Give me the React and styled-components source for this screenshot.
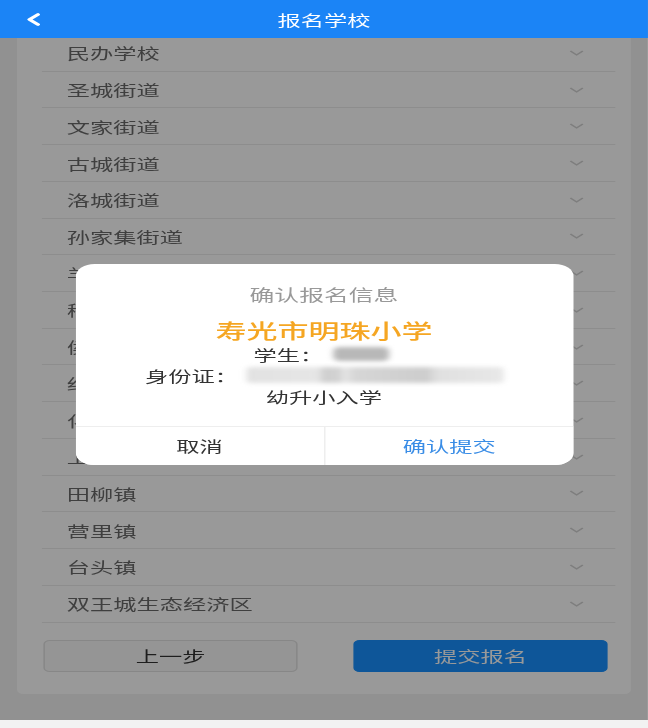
import React from 'react';
import styled, { createGlobalStyle } from 'styled-components';

// the reference capture is stretched sideways, so the page is laid out narrow and widened
const STRETCH = 1.55;

const districts = [
  '民办学校',
  '圣城街道',
  '文家街道',
  '古城街道',
  '洛城街道',
  '孙家集街道',
  '羊口镇',
  '稻田镇',
  '侯镇',
  '纪台镇',
  '化龙镇',
  '上口镇',
  '田柳镇',
  '营里镇',
  '台头镇',
  '双王城生态经济区',
];

const GlobalStyle = createGlobalStyle`
  html, body {
    margin: 0;
    padding: 0;
    background: #f2f2f2;
    overflow: hidden;
  }
`;

const Chevron = () => (
  <svg width="10" height="6" viewBox="0 0 10 6" fill="none">
    <polyline points="1,1 5,5 9,1" stroke="#d2d2d2" strokeWidth="1.2" />
  </svg>
);

const BackArrow = () => (
  <svg width="9" height="13" viewBox="0 0 9 13" fill="none">
    <polyline
      points="7.5,1.5 2,6.5 7.5,11.5"
      stroke="#fff"
      strokeWidth="2.6"
      strokeLinecap="round"
      strokeLinejoin="round"
    />
  </svg>
);

const App = () => (
  <>
    <GlobalStyle />
    <Stage>
      <Header>
        <BackButton>
          <BackArrow />
        </BackButton>
        <HeaderTitle>报名学校</HeaderTitle>
      </Header>

      <Body>
        <Card>
          <DistrictList>
            {districts.map(name => (
              <DistrictRow key={name}>
                <span>{name}</span>
                <Chevron />
              </DistrictRow>
            ))}
          </DistrictList>

          <ActionRow>
            <ActionButton>上一步</ActionButton>
            <ActionButton primary>提交报名</ActionButton>
          </ActionRow>
        </Card>
      </Body>

      <Mask />

      <DialogLayer>
        <Dialog>
          <DialogBody>
            <DialogTitle>确认报名信息</DialogTitle>
            <SchoolName>寿光市明珠小学</SchoolName>
            <InfoLine>
              学生：<RedactedName />
            </InfoLine>
            <InfoLine>
              身份证：<RedactedId />
            </InfoLine>
            <InfoLine>幼升小入学</InfoLine>
          </DialogBody>
          <DialogFooter>
            <DialogButton>取消</DialogButton>
            <DialogButton confirm>确认提交</DialogButton>
          </DialogFooter>
        </Dialog>
      </DialogLayer>
    </Stage>
  </>
);

const Stage = styled.div`
  position: relative;
  width: ${648 / STRETCH}px;
  height: 100vh;
  overflow: hidden;
  transform: scaleX(${STRETCH});
  transform-origin: 0 0;
  background: #f2f2f2;
  font-family: 'Noto Sans CJK SC', 'Noto Sans', sans-serif;
`;

const Header = styled.header`
  position: relative;
  z-index: 3;
  height: 38px;
  background: #1b84f6;
  display: flex;
  align-items: center;
  justify-content: center;
`;

const BackButton = styled.div`
  position: absolute;
  left: 17px;
  top: 13px;
  display: flex;
`;

const HeaderTitle = styled.h1`
  margin: 0;
  font-size: 15px;
  font-weight: 400;
  color: #fff;
`;

const Body = styled.main`
  padding: 0 11px;
`;

const Card = styled.section`
  margin-top: -3px;
  background: #fff;
  border-radius: 0 0 4px 4px;
  padding: 0 10px 22px 16px;
`;

const DistrictList = styled.ul`
  list-style: none;
  margin: 0;
  padding: 0;
`;

const DistrictRow = styled.li`
  box-sizing: border-box;
  height: 36.73px;
  display: flex;
  align-items: center;
  justify-content: space-between;
  padding: 0 20px 0 16px;
  border-bottom: 1px solid #ececec;
  font-size: 15px;
  color: #6a6a6a;
`;

const ActionRow = styled.div`
  display: grid;
  grid-template-columns: 1fr 1fr;
  gap: 36px;
  margin-top: 17px;
  padding: 0 5px 0 1px;
`;

const ActionButton = styled.button`
  height: 32px;
  border-radius: 4px;
  font-family: inherit;
  font-size: 15px;
  border: 1px solid ${props => (props.primary ? '#1890ff' : '#e2e2e2')};
  background: ${props => (props.primary ? '#1890ff' : '#f9f9f9')};
  color: ${props => (props.primary ? '#fff' : '#333')};
`;

const Mask = styled.div`
  position: absolute;
  top: 0;
  left: 0;
  right: 0;
  bottom: 8px;
  z-index: 2;
  background: rgba(0, 0, 0, 0.4);
`;

const DialogLayer = styled.div`
  position: absolute;
  inset: 0;
  z-index: 4;
  display: flex;
  align-items: center;
  justify-content: center;
`;

const Dialog = styled.div`
  width: 321px;
  background: #fff;
  border-radius: 12px;
  overflow: hidden;
  text-align: center;
`;

const DialogBody = styled.div`
  padding: 18px 0 19px;
`;

const DialogTitle = styled.div`
  font-size: 16px;
  line-height: 24px;
  color: #999;
  margin-bottom: 12px;
`;

const SchoolName = styled.div`
  font-size: 20px;
  line-height: 26px;
  font-weight: 500;
  color: #f5a623;
`;

const InfoLine = styled.div`
  font-size: 15px;
  line-height: 21px;
  color: #333;
  display: flex;
  align-items: center;
  justify-content: center;
`;

const RedactedName = styled.span`
  display: inline-block;
  width: 36px;
  height: 14px;
  margin-left: 6px;
  margin-right: 4px;
  border-radius: 4px;
  background: #b8b8b8;
  filter: blur(2px);
`;

const RedactedId = styled.span`
  display: inline-block;
  width: 166px;
  height: 16px;
  margin-left: 5px;
  border-radius: 3px;
  background: linear-gradient(
    90deg,
    #e2e2e2 0%,
    #e6e6e6 28%,
    #cfcfcf 30%,
    #d2d2d2 36%,
    #e6e6e6 38%,
    #d6d6d6 42%,
    #cdcdcd 70%,
    #e0e0e0 74%,
    #e8e8e8 100%
  );
  filter: blur(2px);
`;

const DialogFooter = styled.div`
  display: grid;
  grid-template-columns: 1fr 1fr;
  border-top: 1px solid #eee;
`;

const DialogButton = styled.button`
  height: 38px;
  border: none;
  background: #fff;
  font-family: inherit;
  font-size: 15px;
  color: ${props => (props.confirm ? '#3a8de6' : '#333')};
  border-left: ${props => (props.confirm ? '1px solid #eee' : 'none')};
`;

export default App;
